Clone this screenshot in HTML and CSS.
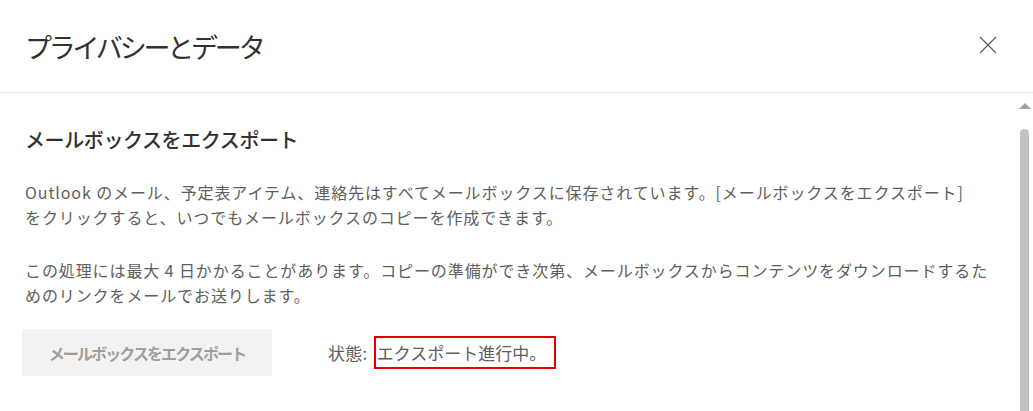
FILE: index.html
```html
<!DOCTYPE html>
<html lang="ja">
<head>
    <meta charset="UTF-8">
    <title>プライバシーとデータ</title>
    <link rel="stylesheet" href="styles.css">
</head>
<body>
    <div class="dialog">
        <header class="dialog-header">
            <h1>プライバシーとデータ</h1>
            <button class="close" aria-label="閉じる">
                <svg width="18" height="18" viewBox="0 0 18 18">
                    <path d="M1 1 L17 17 M17 1 L1 17" stroke="#605e5c" stroke-width="1.2" fill="none"/>
                </svg>
            </button>
        </header>
        <div class="dialog-body">
            <main class="content">
                <h2>メールボックスをエクスポート</h2>
                <p>Outlook のメール、予定表アイテム、連絡先はすべてメールボックスに保存されています。[メールボックスをエクスポート]<br>をクリックすると、いつでもメールボックスのコピーを作成できます。</p>
                <p>この処理には最大 4 日かかることがあります。コピーの準備ができ次第、メールボックスからコンテンツをダウンロードするた<br>めのリンクをメールでお送りします。</p>
                <div class="actions">
                    <button class="export" disabled>メールボックスをエクスポート</button>
                    <span class="status">状態:<span class="highlight">エクスポート進行中。</span></span>
                </div>
            </main>
            <div class="scrollbar">
                <div class="arrow"></div>
                <div class="thumb"></div>
            </div>
        </div>
    </div>
</body>
</html>
```

FILE: styles.css
```css
body {
    margin: 0;
    background: #ffffff;
    font-family: "Noto Sans CJK JP", "Noto Sans", sans-serif;
    color: #323130;
    overflow: hidden;
}
.dialog {
    height: 411px;
    display: flex;
    flex-direction: column;
}
.dialog-header {
    height: 92px;
    display: flex;
    align-items: center;
    justify-content: space-between;
    padding: 0 36px 0 25px;
    border-bottom: 1px solid #e8e6e4;
    flex-shrink: 0;
}
.dialog-header h1 {
    margin: 0;
    font-size: 27px;
    font-weight: 400;
    color: #323130;
    letter-spacing: -3.2px;
}
.close {
    background: none;
    border: none;
    padding: 0;
    width: 18px;
    height: 18px;
    cursor: pointer;
    margin-top: -2px;
}
.dialog-body {
    flex: 1;
    display: flex;
    min-height: 0;
}
.content {
    flex: 1;
    padding: 33px 0 0 25px;
}
h2 {
    margin: 0;
    font-size: 20px;
    line-height: 28px;
    font-weight: 500;
    color: #323130;
    letter-spacing: -0.4px;
}
p {
    margin: 26px 0 0;
    font-size: 16px;
    line-height: 25px;
    color: #605e5c;
    white-space: nowrap;
    letter-spacing: 0.9px;
}
p + p {
    margin-top: 28px;
}
.actions {
    display: flex;
    align-items: center;
    margin-top: 21px;
}
.export {
    width: 250px;
    height: 47px;
    margin-left: -3px;
    border: none;
    border-radius: 2px;
    background: #f3f2f1;
    color: #a19f9d;
    font-family: inherit;
    font-size: 16px;
    font-weight: 700;
    letter-spacing: -1.9px;
}
.status {
    margin-left: 56px;
    font-size: 17px;
    color: #605e5c;
    display: flex;
    align-items: center;
    letter-spacing: 0.3px;
}
.highlight {
    border: 2px solid #e50000;
    padding: 2px 8px 2px 1px;
    margin-left: 6px;
    letter-spacing: 0;
}
.scrollbar {
    width: 17px;
    display: flex;
    flex-direction: column;
    align-items: center;
    flex-shrink: 0;
}
.arrow {
    margin-top: 10px;
    width: 0;
    height: 0;
    border-left: 6px solid transparent;
    border-right: 6px solid transparent;
    border-bottom: 6px solid #a3a3a3;
}
.thumb {
    margin-top: 20px;
    width: 9px;
    flex: 1;
    background: #c1c1c1;
    border-radius: 5px 5px 0 0;
}
```
